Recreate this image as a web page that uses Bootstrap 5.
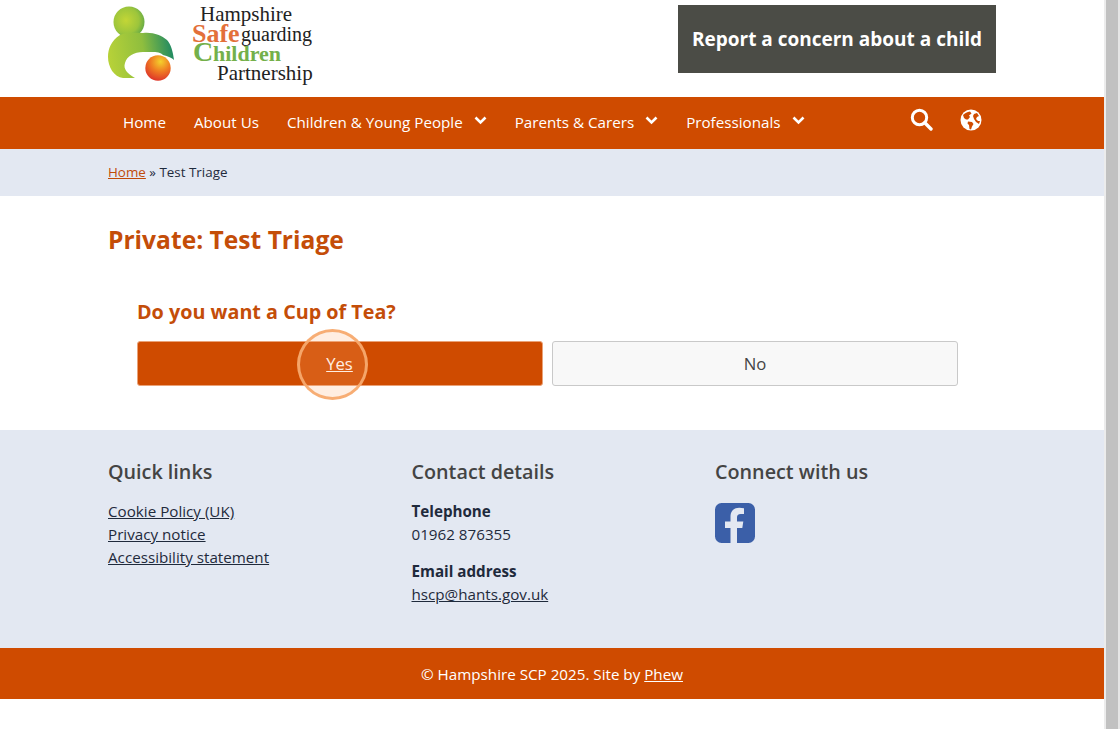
<!DOCTYPE html>
<html lang="en"><head><meta charset="utf-8"><title>Test Triage</title>
<link href="https://cdn.jsdelivr.net/npm/bootstrap@5.3.0/dist/css/bootstrap.min.css" rel="stylesheet">
<style>
html,body{height:729px;overflow:hidden;}
body{font-family:"Open Sans",sans-serif;font-size:15.2px;line-height:23px;color:#1f2a3c;background:#fff;}
.shell{height:729px;}
.pagecol{width:1104px;flex:none;position:relative;}
.fakebar{width:16px;flex:none;background:#c1c1c1;border-left:2px solid #ececec;border-right:2px solid #e6e6e6;}
.wrap{width:888px;margin-left:108px;}
.tophead{height:97px;}
.logo-art{width:207px;height:80px;display:block;margin-top:3px;overflow:visible;}
.logo-art text{font-family:"Liberation Serif",serif;}
.concern{width:318px;height:68px;margin-top:5px;padding:0;white-space:nowrap;background:#4b4c46;color:#fff;font-size:19px;font-weight:700;text-decoration:none;border-radius:0;}
.mainnav{height:52px;background:#cf4b00;}
.mainnav .wrap{height:52px;}
.mainnav a{color:#fff;text-decoration:none;font-size:15.2px;line-height:23px;}
.navitems{padding-left:15px;gap:28px;padding-top:14px;}
.chev{width:13px;height:9px;margin-left:11px;position:relative;top:-3px;}
.navicons{gap:27px;padding-right:14px;padding-top:11px;}
.crumbs{height:47px;background:#e3e8f2;font-size:13.4px;}
.crumbs .wrap{padding-top:12px;}
.crumbs a{color:#c14a08;}
.pagebody{height:234px;}
.pagetitle{font-size:24.6px;font-weight:700;line-height:30px;color:#c44d08;padding-top:29px;margin:0;}
.triage{margin-left:29px;width:821px;padding-top:42px;}
.question{font-size:19.75px;font-weight:700;line-height:30px;color:#c44d08;margin:0 0 14px;}
.answer{height:45px;width:406px;font-size:16.7px;display:flex;align-items:center;justify-content:center;border-radius:3px;}
.answer-yes{background:#cf4b00;border:1px solid #eaa277;color:#fff;text-decoration:underline;padding-left:11px;}
.answer-yes:hover{background:#cf4b00;color:#fff;}
.answer-no{background:#f8f8f8;border:1px solid #c9c9c9;color:#444;}
.spot{position:absolute;left:297px;top:329px;width:71px;height:71px;border-radius:50%;background:rgba(255,170,110,.2);border:3px solid rgba(247,170,110,.95);pointer-events:none;}
.sitefoot{height:218px;background:#e3e8f2;padding-top:27px;}
.footcol{width:303.5px;flex:none;}
.foothead{font-size:19.75px;font-weight:600;line-height:30px;color:#444;margin:0 0 13px;}
.sitefoot a{color:#1f2a3c;}
.footgap{margin-bottom:14px;}
.fblink{padding-top:3px;}
.copybar{height:51px;background:#cf4b00;color:#fff;padding-top:15px;}
.copybar a{color:#fff;}
</style></head><body>
<div class="shell d-flex">
<div class="pagecol">
<header class="tophead wrap d-flex justify-content-between align-items-start">
<a href="#" class="d-block text-decoration-none"><svg class="logo-art" viewBox="0 0 207 80" aria-label="Hampshire Safeguarding Children Partnership logo">
<defs>
<radialGradient id="headg" cx=".4" cy=".45" r=".65"><stop offset="0" stop-color="#c3d636"/><stop offset=".65" stop-color="#9cc53c"/><stop offset="1" stop-color="#5da648"/></radialGradient>
<linearGradient id="gr" x1="0" y1=".6" x2="1" y2=".5"><stop offset="0" stop-color="#b8d238"/><stop offset=".55" stop-color="#8fbe3e"/><stop offset="1" stop-color="#1f8a62"/></linearGradient>
<radialGradient id="ball" cx=".6" cy=".25" r=".8"><stop offset="0" stop-color="#f4d12c"/><stop offset=".5" stop-color="#ef7a22"/><stop offset="1" stop-color="#dc2f2a"/></radialGradient>
</defs>
<circle cx="21" cy="19" r="15.500" fill="url(#headg)"/>
<path d="M12 32C3 38 0 46 0 54c0 10 6 20 15 21h12C19 70 15 66 17 60c2-7 9-11 18-11 9 0 17-1 20 3 5 1 9 3 11 5-1-8-3-16-7-20-6-5-14-8-24-7-9 0-16-1-23 2z" fill="url(#gr)"/>
<circle cx="50" cy="65" r="12.700" fill="url(#ball)"/>
<text x="92" y="18" font-size="21" fill="#222">Hampshire</text>
<text x="84" y="39" font-size="26" font-weight="700" fill="#e3703a">Safe</text>
<text x="133" y="38" font-size="20" fill="#222">guarding</text>
<text x="85" y="58" font-size="28" font-weight="700" fill="#74b04a">C</text>
<text x="105" y="58" font-size="22" font-weight="700" fill="#74b04a">hildren</text>
<text x="109" y="77" font-size="21" fill="#222">Partnership</text>
</svg></a>
<a href="#" class="btn concern d-flex align-items-center justify-content-center">Report a concern about a child</a>
</header>
<nav class="mainnav">
<div class="wrap d-flex justify-content-between align-items-start">
<div class="navitems d-flex">
<a href="#">Home</a><a href="#">About Us</a>
<a href="#">Children &amp; Young People<svg class="chev" viewBox="0 0 13 9"><path d="M1.500 1.500 6.500 6.500 11.500 1.500" fill="none" stroke="#fff" stroke-width="2.600"/></svg></a>
<a href="#">Parents &amp; Carers<svg class="chev" viewBox="0 0 13 9"><path d="M1.500 1.500 6.500 6.500 11.500 1.500" fill="none" stroke="#fff" stroke-width="2.600"/></svg></a>
<a href="#">Professionals<svg class="chev" viewBox="0 0 13 9"><path d="M1.500 1.500 6.500 6.500 11.500 1.500" fill="none" stroke="#fff" stroke-width="2.600"/></svg></a>
</div>
<div class="navicons d-flex align-items-center">
<a href="#" aria-label="Search"><svg width="23" height="23" viewBox="0 0 23 23" class="d-block"><circle cx="9.500" cy="9.500" r="7.200" fill="none" stroke="#fff" stroke-width="3"/><path d="M14.800 14.800 21 21" stroke="#fff" stroke-width="3.400" stroke-linecap="round"/></svg></a>
<a href="#" aria-label="Language"><svg width="22" height="22" viewBox="0 0 22 22" class="d-block"><circle cx="11" cy="11" r="10.500" fill="#fff"/><path d="M3 6c2-2 4-3 7-3.500l1.500 2-2.500 2 1 1.500-2 2.500H6L4 9zM8 12.500l4 .5 1.500 2-1.500 2.500-1 3-1.500-.5-.5-4-1.500-1.500zM14 5l3-1 2 3-2 1-1 2 2 2 2 0-1 3-3-2-2-3-1-3z" fill="#cf4b00"/></svg></a>
</div>
</div>
</nav>
<div class="crumbs"><div class="wrap"><a href="#">Home</a> » Test Triage</div></div>
<main class="pagebody wrap">
<h1 class="pagetitle">Private: Test Triage</h1>
<div class="triage">
<h2 class="question">Do you want a Cup of Tea?</h2>
<div class="d-flex justify-content-between">
<a href="#" class="btn answer answer-yes">Yes</a>
<button class="btn answer answer-no" type="button">No</button>
</div>
</div>
</main>
<footer class="sitefoot">
<div class="wrap d-flex">
<div class="footcol">
<h3 class="foothead">Quick links</h3>
<a href="#" class="d-block">Cookie Policy (UK)</a>
<a href="#" class="d-block">Privacy notice</a>
<a href="#" class="d-block">Accessibility statement</a>
</div>
<div class="footcol">
<h3 class="foothead">Contact details</h3>
<div class="footgap"><strong class="d-block">Telephone</strong>01962 876355</div>
<div><strong class="d-block">Email address</strong><a href="#">hscp@hants.gov.uk</a></div>
</div>
<div class="footcol">
<h3 class="foothead">Connect with us</h3>
<a href="#" aria-label="Facebook" class="d-block fblink"><svg width="40" height="40" viewBox="0 0 40 40" class="d-block"><rect width="40" height="40" rx="6.500" fill="#3b5fa8"/><path d="M22 40V25h5.300l1-6.500H22v-4c0-2 1-3.500 3.800-3.500H29V5.300C27.500 5 25.700 4.800 24.200 4.800c-5.200 0-8.700 3.200-8.700 8.800v4.900H10V25h5.500v15z" fill="#e3e8f2"/></svg></a>
</div>
</div>
</footer>
<div class="copybar text-center">© Hampshire SCP 2025. Site by <a href="#">Phew</a></div>
<div class="spot"></div>
</div>
<div class="fakebar"></div>
</div>
<script src="https://cdn.jsdelivr.net/npm/bootstrap@5.3.0/dist/js/bootstrap.bundle.min.js"></script>
</body></html>
